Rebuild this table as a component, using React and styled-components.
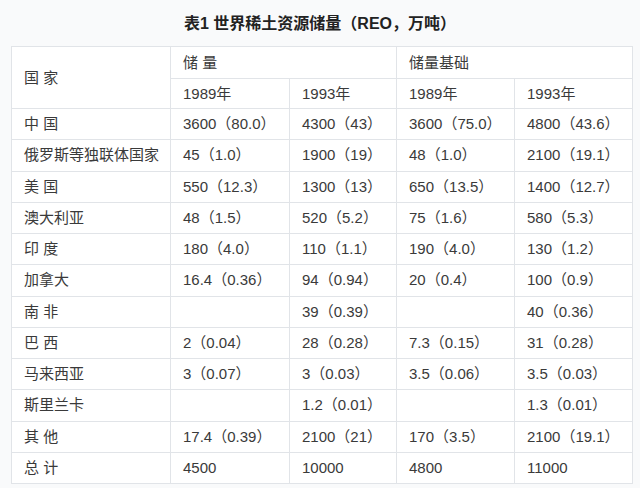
import React from 'react'
import styled, { createGlobalStyle } from 'styled-components'

const GlobalStyle = createGlobalStyle`
  html, body {
    margin: 0;
    padding: 0;
    background: #f9fafb;
  }
  body {
    font-family: "Liberation Sans", Arial, "Noto Sans CJK SC", sans-serif;
    color: #333;
  }
`

const rows = [
  ['中 国', '3600（80.0）', '4300（43）', '3600（75.0）', '4800（43.6）'],
  ['俄罗斯等独联体国家', '45（1.0）', '1900（19）', '48（1.0）', '2100（19.1）'],
  ['美 国', '550（12.3）', '1300（13）', '650（13.5）', '1400（12.7）'],
  ['澳大利亚', '48（1.5）', '520（5.2）', '75（1.6）', '580（5.3）'],
  ['印 度', '180（4.0）', '110（1.1）', '190（4.0）', '130（1.2）'],
  ['加拿大', '16.4（0.36）', '94（0.94）', '20（0.4）', '100（0.9）'],
  ['南 非', '', '39（0.39）', '', '40（0.36）'],
  ['巴 西', '2（0.04）', '28（0.28）', '7.3（0.15）', '31（0.28）'],
  ['马来西亚', '3（0.07）', '3（0.03）', '3.5（0.06）', '3.5（0.03）'],
  ['斯里兰卡', '', '1.2（0.01）', '', '1.3（0.01）'],
  ['其 他', '17.4（0.39）', '2100（21）', '170（3.5）', '2100（19.1）'],
  ['总 计', '4500', '10000', '4800', '11000'],
]

function App() {
  return (
    <Page>
      <GlobalStyle />
      <Title>表1 世界稀土资源储量（REO，万吨）</Title>
      <Table>
        <colgroup>
          <col style={{ width: 159 }} />
          <col style={{ width: 119 }} />
          <col style={{ width: 107 }} />
          <col style={{ width: 118 }} />
          <col style={{ width: 118 }} />
        </colgroup>
        <thead>
          <HeadRow $h={32}>
            <Cell rowSpan={2}>国 家</Cell>
            <Cell colSpan={2}>储 量</Cell>
            <Cell colSpan={2}>储量基础</Cell>
          </HeadRow>
          <HeadRow $h={30}>
            <Cell>1989年</Cell>
            <Cell>1993年</Cell>
            <Cell>1989年</Cell>
            <Cell>1993年</Cell>
          </HeadRow>
        </thead>
        <tbody>
          {rows.map(r => (
            <Row key={r[0]}>
              {r.map((c, i) => (
                <Cell key={i}>{c}</Cell>
              ))}
            </Row>
          ))}
        </tbody>
      </Table>
    </Page>
  )
}

export default App

const Page = styled.div`
  width: 640px;
  height: 488px;
  padding-top: 15px;
  box-sizing: border-box;
  overflow: hidden;
`

const Title = styled.h1`
  margin: 0 0 13px 0;
  height: 18px;
  line-height: 18px;
  text-align: center;
  font-size: 16px;
  font-weight: bold;
  color: #222;
  font-family: "Liberation Sans", Arial, "Noto Sans CJK SC", sans-serif;
`

const Table = styled.table`
  margin-left: 11px;
  width: 622px;
  table-layout: fixed;
  border-collapse: collapse;
  background: #fff;
  border: 1px solid #e1e4e8;
`

const HeadRow = styled.tr`
  height: ${p => p.$h}px;
`

const Row = styled.tr`
  height: 31.25px;
`

const Cell = styled.td`
  border: 1px solid #e1e4e8;
  padding: 0 0 0 12px;
  font-size: 15px;
  line-height: 18px;
  color: #3a3a3a;
  text-align: left;
  vertical-align: middle;
  white-space: nowrap;
`
